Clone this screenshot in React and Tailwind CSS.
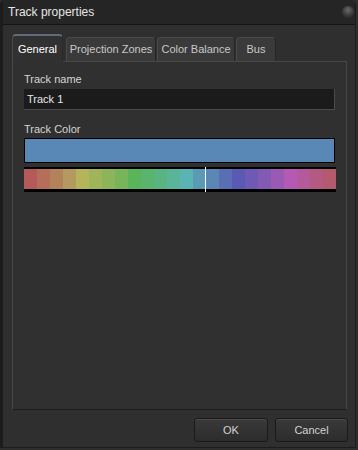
import React from "react";

const HUES = [
  "bg-[#b45a5a]",
  "bg-[#b46e5a]",
  "bg-[#b4825a]",
  "bg-[#b49a5e]",
  "bg-[#b4b45a]",
  "bg-[#a0b45a]",
  "bg-[#8cb45a]",
  "bg-[#78b45a]",
  "bg-[#5ab45a]",
  "bg-[#5ab46e]",
  "bg-[#5ab482]",
  "bg-[#5ab49a]",
  "bg-[#5ab4b4]",
  "bg-[#5a9ab4]",
  "bg-[#5a87b4]",
  "bg-[#5a6eb4]",
  "bg-[#5a5ab4]",
  "bg-[#6e5ab4]",
  "bg-[#825ab4]",
  "bg-[#9a5ab4]",
  "bg-[#b45ab4]",
  "bg-[#b45a9a]",
  "bg-[#b45a82]",
  "bg-[#b45a6e]",
];

function Tab({ label, active, w }) {
  if (active) {
    return (
      <div className="w-[51px] shrink-0 h-[28px] rounded-t-[4px] border-t-2 border-[#5d6b7b] border-l border-l-[#4a4a4a] border-r border-r-[#2a2a2a] bg-[#313131] flex items-center justify-center text-white -mb-px relative z-10">
        {label}
      </div>
    );
  }
  return (
    <div className={`${w} shrink-0 h-[24px] rounded-t-[4px] border-t border-x border-[#4a4a4a] border-r-[#262626] bg-[#3a3a3a] flex items-center justify-center text-[#c8c8c8]`}>
      {label}
    </div>
  );
}

function Button({ children, w }) {
  return (
    <div className={`${w} h-[24px] rounded-[3px] border border-[#1a1a1a] bg-gradient-to-b from-[#3a3a3a] to-[#2c2c2c] shadow-[inset_0_1px_0_#4a4a4a] flex items-center justify-center text-[#d2d2d2]`}>
      {children}
    </div>
  );
}

export default function App() {
  return (
    <div className="w-[358px] h-[450px] bg-[#2e2e2e] font-['Liberation_Sans',Arial,sans-serif] text-[11px] overflow-hidden">
      <div className="w-[356px] h-[448px] flex flex-col bg-[#2f2f2f] border-l-[3px] border-r border-b border-[#1c1c1c] rounded-t-[5px]">
        <div className="h-[25px] shrink-0 bg-[#252525] border-b border-[#141414] flex items-center justify-between pl-[5px] pr-[1px] rounded-tr-[5px]">
          <span className="text-[12px] text-[#e6e6e6]">Track properties</span>
          <div className="w-[12px] h-[12px] rounded-full bg-[radial-gradient(circle_at_50%_35%,#6a6a6a,#3a3a3a_55%,#202020)]" />
        </div>
        <div className="flex-1 flex flex-col pl-[9px] pr-[8px] pt-[8px]">
          <div className="flex items-end gap-[1px] h-[28px]">
            <Tab label="General" active />
            <div className="w-px" />
            <Tab label="Projection Zones" w="w-[90px]" />
            <Tab label="Color Balance" w="w-[78px]" />
            <Tab label="Bus" w="w-[40px]" />
          </div>
          <div className="w-[335px] h-[349px] border border-[#474747] border-b-[#1c1c1c] bg-[#303030] px-[11px] pt-[11px] flex flex-col">
            <div className="text-[#d4d4d4] leading-[13px]">Track name</div>
            <div className="mt-[3px] h-[21px] bg-[#1b1b1b] border-b border-r border-[#4b4b4b] flex items-center pl-[3px] text-[#e8e8e8]">
              Track 1
            </div>
            <div className="mt-[13px] text-[#d4d4d4] leading-[13px]">Track Color</div>
            <div className="mt-[2px] w-[311px] h-[25px] border border-black bg-[#5a88b6]" />
            <div className="mt-[4px] w-[312px] h-[25px] bg-black pt-[2px] pb-[3px] flex relative shrink-0">
              {HUES.map((c) => (
                <div key={c} className={`w-[13px] h-[20px] shrink-0 ${c}`} />
              ))}
              <div className="absolute left-[181px] top-0 w-px h-[25px] bg-white" />
            </div>
          </div>
          <div className="flex justify-end gap-[7px] mt-[8px] -mr-[1px]">
            <Button w="w-[74px]">OK</Button>
            <Button w="w-[73px]">Cancel</Button>
          </div>
        </div>
      </div>
    </div>
  );
}
